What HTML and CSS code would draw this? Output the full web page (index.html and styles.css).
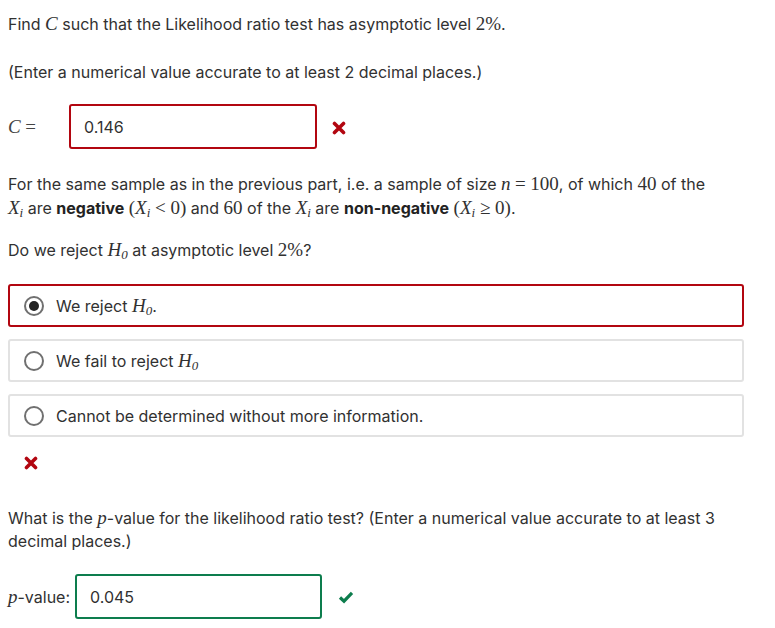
FILE: index.html
```html
<!DOCTYPE html>
<html>
<head>
<meta charset="utf-8">
<link rel="stylesheet" href="styles.css">
</head>
<body>
<div class="problem">
  <p class="para first">Find <span class="m mi">C</span> such that the Likelihood ratio test has asymptotic level <span class="m">2%</span>.</p>
  <p class="para">(Enter a numerical value accurate to at least 2 decimal places.)</p>

  <div class="answer-row row-c">
    <span class="label"><span class="m mi">C</span> <span class="m">=</span></span>
    <div class="input incorrect">0.146</div>
    <span class="status">
      <svg width="14" height="14" viewBox="0 0 14 14"><path d="M2.5 2.5 L11.5 11.5 M11.5 2.5 L2.5 11.5" stroke="#b20610" stroke-width="3.6" stroke-linecap="round"/></svg>
    </span>
  </div>

  <p class="para second">For the same sample as in the previous part, i.e. a sample of size <span class="m mi">n</span> <span class="m">=</span> <span class="m">100</span>, of which <span class="m">40</span> of the <span class="m mi">X<sub>i</sub></span> are <b>negative</b> <span class="m">(<span class="mi">X<sub>i</sub></span> &lt; 0)</span> and <span class="m">60</span> of the <span class="m mi">X<sub>i</sub></span> are <b>non-negative</b> <span class="m">(<span class="mi">X<sub>i</sub></span> ≥ 0)</span>.</p>
  <p class="para">Do we reject <span class="m mi">H<sub>0</sub></span> at asymptotic level <span class="m">2%</span>?</p>

  <div class="choices">
    <label class="choice selected-wrong"><span class="radio checked"></span><span>We reject <span class="m mi">H<sub>0</sub></span>.</span></label>
    <label class="choice"><span class="radio"></span><span>We fail to reject <span class="m mi">H<sub>0</sub></span></span></label>
    <label class="choice"><span class="radio"></span><span>Cannot be determined without more information.</span></label>
  </div>
  <div class="choice-status">
    <svg width="14" height="14" viewBox="0 0 14 14"><path d="M2.5 2.5 L11.5 11.5 M11.5 2.5 L2.5 11.5" stroke="#b20610" stroke-width="3.6" stroke-linecap="round"/></svg>
  </div>

  <p class="para third">What is the <span class="m mi">p</span>-value for the likelihood ratio test? (Enter a numerical value accurate to at least 3 decimal places.)</p>

  <div class="answer-row row-p">
    <span class="label"><span class="m mi">p</span>-value:</span>
    <div class="input correct">0.045</div>
    <span class="status">
      <svg width="16" height="14" viewBox="0 0 16 14"><path d="M2 7.5 L6 11.2 L14 2.8" fill="none" stroke="#0d7d4d" stroke-width="3.2"/></svg>
    </span>
  </div>
</div>
</body>
</html>
```

FILE: styles.css
```css
html, body {
  margin: 0;
  padding: 0;
  background: #fff;
}
body {
  font-family: Inter, "Open Sans", sans-serif;
  font-size: 16px;
  color: #313131;
}
.problem {
  padding: 0 8px;
  width: 736px;
}
.para {
  margin: 0;
  line-height: 23px;
  max-width: 720px;
}
.first {
  padding-top: 12px;
  margin-bottom: 25px;
}
.m {
  font-family: "Liberation Serif", serif;
  font-size: 19px;
}
.mi {
  font-style: italic;
}
.m sub, .mi sub {
  font-size: 13px;
  font-style: italic;
  vertical-align: -3px;
  line-height: 0;
}
b {
  font-weight: 700;
  color: #222;
}
.answer-row {
  display: flex;
  align-items: center;
}
.row-c {
  margin-top: 20px;
}
.row-c .label {
  width: 61px;
  color: #444;
}
.input {
  box-sizing: border-box;
  height: 45px;
  width: 248px;
  border-radius: 3px;
  display: flex;
  align-items: center;
  padding-left: 13px;
  font-size: 16px;
  color: #313131;
}
.input.incorrect {
  border: 2px solid #b20610;
}
.input.correct {
  border: 2px solid #0d7d4d;
}
.row-c .status {
  margin-left: 15px;
  display: flex;
  margin-top: 2px;
}
.second {
  margin-top: 23px;
  margin-bottom: 18px;
  max-width: 714px;
}
.choices {
  margin-top: 22px;
  display: flex;
  flex-direction: column;
  gap: 12px;
}
.choice {
  box-sizing: border-box;
  height: 43px;
  border: 2px solid #e2e2e2;
  border-radius: 3px;
  display: flex;
  align-items: center;
  padding-left: 14px;
  gap: 12px;
}
.choice.selected-wrong {
  border-color: #b20610;
}
.radio {
  box-sizing: border-box;
  width: 20px;
  height: 20px;
  border: 2px solid #707070;
  border-radius: 50%;
  display: flex;
  align-items: center;
  justify-content: center;
}
.radio.checked::after {
  content: "";
  width: 10px;
  height: 10px;
  border-radius: 50%;
  background: #222;
}
.choice-status {
  padding-left: 16px;
  margin-top: 17px;
  height: 14px;
}
.third {
  margin-top: 38px;
}
.row-p {
  margin-top: 21px;
}
.row-p .label {
  margin-right: 5px;
}
.row-p .input {
  width: 247px;
}
.row-p .status {
  margin-left: 16px;
  display: flex;
}
```
